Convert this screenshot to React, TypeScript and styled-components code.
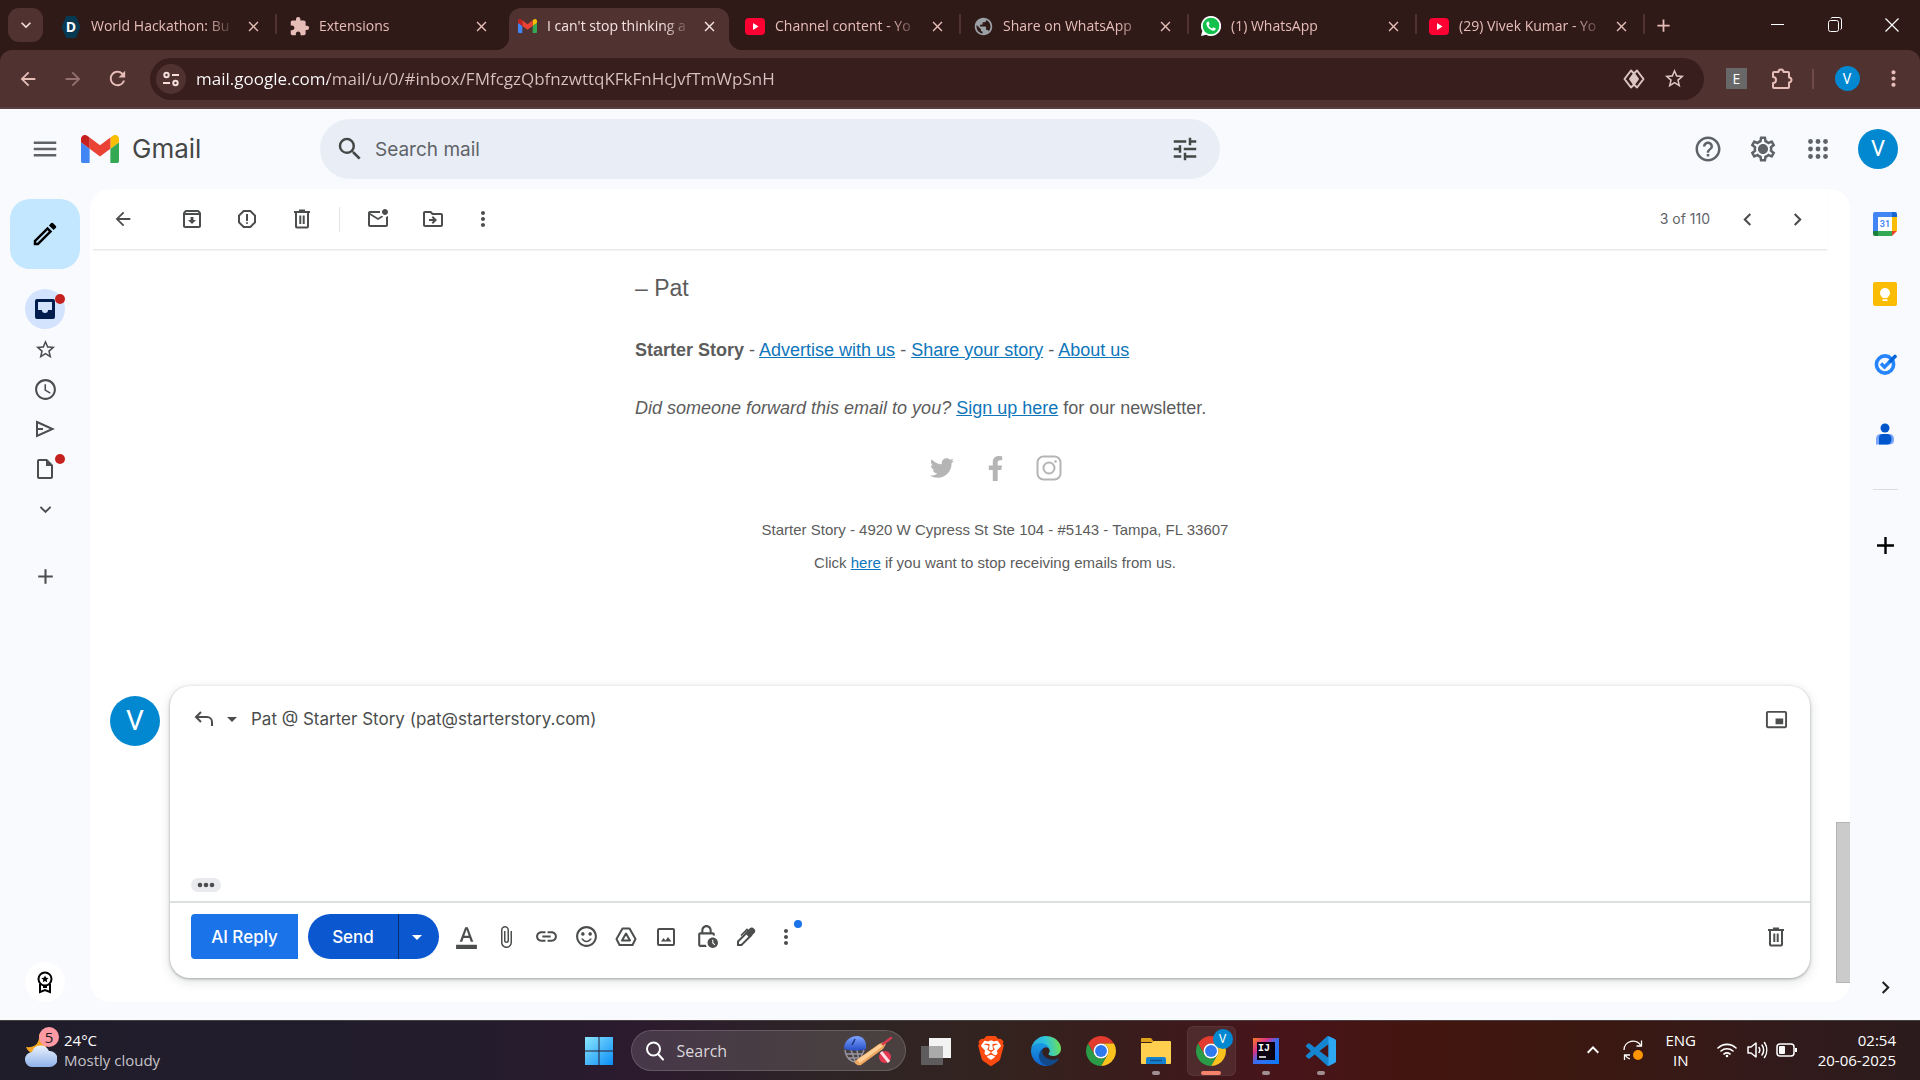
import React from "react";
import styled, { createGlobalStyle, css } from "styled-components";
import {
  MdAccessTime,
  MdAdd,
  MdArrowBack,
  MdArrowDropDown,
  MdArrowForward,
  MdAttachFile,
  MdChevronLeft,
  MdChevronRight,
  MdClose,
  MdExpandLess,
  MdExpandMore,
  MdExtension,
  MdFormatColorText,
  MdHelpOutline,
  MdLink,
  MdMenu,
  MdMoreVert,
  MdOutlineArchive,
  MdOutlineDriveFileMove,
  MdOutlineInsertDriveFile,
  MdOutlineLockClock,
  MdOutlineMarkEmailUnread,
  MdOutlineModeEdit,
  MdOutlineReport,
  MdOutlineSettings,
  MdPictureInPictureAlt,
  MdPublic,
  MdRefresh,
  MdSearch,
  MdSentimentSatisfiedAlt,
  MdStarBorder,
  MdTune,
} from "react-icons/md";
import { FaFacebookF, FaTwitter } from "react-icons/fa";
import { SiBrave } from "react-icons/si";

const ui = `"Open Sans", "Noto Sans", sans-serif`;
const product = `Inter, Roboto, sans-serif`;

const GlobalStyle = createGlobalStyle`
  *, *::before, *::after { box-sizing: border-box; }
  body { margin: 0; background: #f8fafe; }
  button { border: 0; padding: 0; background: none; font: inherit; color: inherit; cursor: pointer; }
  input, textarea { border: 0; padding: 0; background: none; font: inherit; color: inherit; outline: none; }
  p { margin: 0; }
  svg { display: block; flex: none; }
`;

const Screen = styled.div`
  display: flex;
  flex-direction: column;
  height: 100vh;
  min-width: 1200px;
  overflow: hidden;
  font-family: ${ui};
`;

/* ---------- browser chrome ---------- */

const TabStrip = styled.div`
  display: flex;
  align-items: flex-end;
  height: 50px;
  flex: none;
  background: #301a18;
  color: #e7bdb8;
`;

const TabSearch = styled.button`
  display: grid;
  place-items: center;
  width: 35px;
  height: 34px;
  margin: 0 6px 8px 8px;
  border-radius: 11px;
  background: #503331;
  color: #f3dedc;
`;

const Tabs = styled.div`
  display: flex;
  min-width: 0;
`;

const Tab = styled.div<{ $active?: boolean; $divided?: boolean }>`
  position: relative;
  display: flex;
  align-items: center;
  gap: 10px;
  width: 220px;
  height: 42px;
  margin: 0 4px;
  padding: 0 12px 6px 8px;
  font-size: 14px;
  line-height: 20px;

  ${(p) =>
    p.$divided &&
    css`
      &::after {
        content: "";
        position: absolute;
        right: -4px;
        top: 6px;
        width: 2px;
        height: 20px;
        background: #503331;
      }
    `}

  ${(p) =>
    p.$active &&
    css`
      color: #f5e4e2;
      z-index: 1;
      background: #503331;
      border-radius: 12px 12px 0 0;
      &::before,
      &::after {
        content: "";
        position: absolute;
        bottom: 0;
        width: 14px;
        height: 14px;
      }
      &::before {
        right: 100%;
        background: radial-gradient(circle at 0 0, transparent 14px, #503331 15px);
      }
      &::after {
        left: 100%;
        background: radial-gradient(circle at 100% 0, transparent 14px, #503331 15px);
      }
    `}
`;

const TabTitle = styled.span`
  flex: 1;
  min-width: 0;
  overflow: hidden;
  white-space: nowrap;
  mask-image: linear-gradient(90deg, #000 calc(100% - 28px), transparent);
`;

const TabIcon = styled.span`
  display: grid;
  place-items: center;
  width: 20px;
  height: 20px;
  flex: none;
`;

const TabClose = styled.button`
  display: grid;
  place-items: center;
  width: 16px;
  height: 20px;
  flex: none;
`;

const NewTab = styled.button`
  display: grid;
  place-items: center;
  width: 36px;
  height: 34px;
  margin-bottom: 8px;
`;

const WindowControls = styled.div`
  display: flex;
  margin-left: auto;
  align-self: stretch;
  color: #fff;
`;

const WindowButton = styled.button`
  display: grid;
  place-items: center;
  width: 57px;
  height: 50px;
`;

const ToolbarBacking = styled.div`
  flex: none;
  background: #301a18;
`;

const BrowserToolbar = styled.div`
  display: flex;
  align-items: center;
  height: 59px;
  padding: 0 6px 0 5px;
  background: #503331;
  border-bottom: 2px solid #5a3f40;
  border-radius: 12px 12px 0 0;
  color: #e7bdb8;
`;

const NavButton = styled.button<{ $width?: number; $dim?: boolean }>`
  display: grid;
  place-items: center;
  width: ${(p) => p.$width ?? 45}px;
  height: 40px;
  flex: none;
  opacity: ${(p) => (p.$dim ? 0.45 : 1)};
`;

const AddressBar = styled.div`
  display: flex;
  align-items: center;
  flex: 1;
  height: 42px;
  margin: 0 10px;
  padding: 0 10px 0 6px;
  border-radius: 21px;
  background: #391e1e;
  color: #dcc6c4;
`;

const SiteInfo = styled.button`
  display: grid;
  place-items: center;
  width: 30px;
  height: 30px;
  margin-right: 10px;
  border-radius: 50%;
  background: #503331;
  color: #f3dedc;
`;

const Url = styled.input`
  flex: 1;
  min-width: 0;
  height: 30px;
  font-size: 17px;
  color: #d8c3c1;
  background: linear-gradient(90deg, #fff 132px, #d8c3c1 132px);
  background-clip: text;
  -webkit-text-fill-color: transparent;
`;

const ExtensionBadge = styled.span`
  display: grid;
  place-items: center;
  width: 21px;
  height: 21px;
  background: #686868;
  color: #fff;
  font-size: 14px;
`;

const ToolbarDivider = styled.span`
  width: 2px;
  height: 20px;
  margin: 0 8px;
  background: #704a47;
`;

const Avatar = styled.span<{ $size: number; $font: number }>`
  display: grid;
  place-items: center;
  flex: none;
  width: ${(p) => p.$size}px;
  height: ${(p) => p.$size}px;
  border-radius: 50%;
  background: #0288d1;
  color: #fff;
  font-family: Roboto, sans-serif;
  font-size: ${(p) => p.$font}px;
  line-height: 1;
`;

/* ---------- mail app ---------- */

const Mail = styled.div`
  display: flex;
  flex-direction: column;
  flex: 1;
  min-height: 0;
  background: #f8fafe;
  color: #4b4e4d;
  font-family: ${product};
`;

const MailHeader = styled.header`
  display: flex;
  align-items: center;
  height: 80px;
  flex: none;
  padding-right: 22px;
  color: #5f6368;
`;

const Brand = styled.div`
  display: flex;
  align-items: center;
  width: 320px;
  flex: none;
  padding-left: 20px;
  color: #444746;
`;

const BrandName = styled.span`
  margin-left: 13px;
  font-size: 26px;
  line-height: 32px;
`;

const MenuButton = styled.button`
  display: grid;
  place-items: center;
  width: 50px;
  height: 50px;
  margin-right: 11px;
  color: #5f6368;
`;

const SearchBox = styled.form`
  display: flex;
  align-items: center;
  flex: 0 1 900px;
  height: 60px;
  padding: 0 20px 0 15px;
  border-radius: 30px;
  background: #e9eef6;
  color: #444746;
`;

const SearchInput = styled.input`
  flex: 1;
  min-width: 0;
  margin: 0 10px;
  font-size: 19px;
  &::placeholder {
    color: #5f6368;
    opacity: 1;
  }
`;

const HeaderActions = styled.div`
  display: flex;
  align-items: center;
  margin-left: auto;
`;

const IconButton = styled.button<{ $width?: number; $height?: number }>`
  position: relative;
  display: grid;
  place-items: center;
  flex: none;
  width: ${(p) => p.$width ?? 55}px;
  height: ${(p) => p.$height ?? 40}px;
`;

const AccountButton = styled.button`
  margin-left: 13px;
`;

const MailBody = styled.div`
  display: flex;
  flex: 1;
  min-height: 0;
  padding-bottom: 18px;
`;

const Rail = styled.nav`
  display: flex;
  flex-direction: column;
  align-items: center;
  width: 90px;
  flex: none;
  padding-top: 10px;
`;

const Compose = styled.button`
  display: grid;
  place-items: center;
  width: 70px;
  height: 70px;
  flex: none;
  margin-bottom: 20px;
  border-radius: 20px;
  background: #c2e7ff;
  color: #000;
`;

const RailItem = styled.button<{ $active?: boolean; $spaced?: boolean }>`
  position: relative;
  display: grid;
  place-items: center;
  width: 40px;
  height: 40px;
  flex: none;
  margin-top: ${(p) => (p.$spaced ? 27 : 0)}px;
  border-radius: 50%;
  background: ${(p) => (p.$active ? "#d3e3fd" : "transparent")};
  color: ${(p) => (p.$active ? "#001d4d" : "#4b4e4d")};
`;

const Dot = styled.span<{ $blue?: boolean }>`
  position: absolute;
  right: ${(p) => (p.$blue ? 4 : 0)}px;
  top: ${(p) => (p.$blue ? 3 : 5)}px;
  width: ${(p) => (p.$blue ? 8 : 10)}px;
  height: ${(p) => (p.$blue ? 8 : 10)}px;
  border-radius: 50%;
  background: ${(p) => (p.$blue ? "#1a73e8" : "#c5221f")};
`;

const Reward = styled.button`
  display: grid;
  place-items: center;
  width: 40px;
  height: 40px;
  margin-top: auto;
  border-radius: 50%;
  background: #fff;
  color: #000;
`;

const Panel = styled.main`
  display: flex;
  flex-direction: column;
  flex: 1;
  min-width: 0;
  border-radius: 20px;
  background: #fff;
  overflow: hidden;
`;

const Actions = styled.div`
  display: flex;
  align-items: center;
  height: 61px;
  flex: none;
  margin: 0 23px 0 3px;
  padding: 0 5px 0 2px;
  border-bottom: 1px solid #e6e8ea;
  box-shadow: 0 1px 1px #f3f4f5;
`;

const BackSlot = styled.div`
  margin-right: 14px;
`;

const ActionDivider = styled.span`
  width: 1px;
  height: 25px;
  margin: 0 10px;
  background: #e3e5e8;
`;

const Count = styled.span`
  margin: 0 12px 0 auto;
  font-size: 14px;
  line-height: 20px;
  color: #5f6368;
`;

const ScrollRow = styled.div`
  display: flex;
  flex: 1;
  min-height: 0;
`;

const Thread = styled.div`
  display: flex;
  flex-direction: column;
  flex: 1;
  min-width: 0;
  padding-bottom: 24px;
`;

const ScrollTrack = styled.div`
  display: flex;
  align-items: flex-end;
  width: 14px;
  flex: none;
  padding-bottom: 19px;
`;

const ScrollThumb = styled.div`
  width: 14px;
  height: 161px;
  border: 1px solid #b5b5b5;
  border-right: 0;
  background: #cbcbcb;
`;

const EmailArea = styled.div`
  padding: 19px 16px 0 80px;
`;

const Email = styled.article`
  max-width: 720px;
  margin: 0 auto;
  font-family: "Liberation Sans", Arial, sans-serif;
  font-size: 18px;
  line-height: 30px;
  color: #5c5c5c;
  a {
    color: #0f76bb;
  }
`;

const SignOff = styled.p`
  font-size: 23px;
  line-height: 38px;
`;

const EmailLine = styled.p`
  margin-top: 28px;
`;

const Socials = styled.div`
  display: flex;
  justify-content: center;
  align-items: center;
  gap: 28px;
  margin: 32px 0;
  a {
    display: grid;
    place-items: center;
    width: 25px;
    height: 26px;
    color: #b5b5b5;
  }
`;

const FinePrint = styled.p`
  font-size: 15px;
  line-height: 33px;
  text-align: center;
`;

const ReplyRow = styled.section`
  display: flex;
  align-items: flex-start;
  gap: 10px;
  margin-top: auto;
  padding: 0 26px 0 20px;
`;

const ReplyAvatar = styled.div`
  padding-top: 10px;
`;

const ReplyCard = styled.form`
  flex: 1;
  min-width: 0;
  border-radius: 20px;
  background: #fff;
  box-shadow: 0 1px 3px rgba(60, 64, 67, 0.42), 0 3px 10px 2px rgba(60, 64, 67, 0.12);
`;

const ReplyTop = styled.div`
  display: flex;
  align-items: center;
  height: 66px;
  padding: 0 14px 0 18px;
`;

const Recipient = styled.span`
  margin: 0 auto 0 15px;
  font-size: 17px;
  line-height: 24px;
`;

const ReplyText = styled.textarea`
  display: block;
  width: 100%;
  height: 126px;
  padding: 0 21px;
  resize: none;
  font-size: 17px;
`;

const Trimmed = styled.button`
  display: grid;
  place-items: center;
  width: 30px;
  height: 14px;
  margin: 0 0 9px 21px;
  border-radius: 7px;
  background: #e8eaed;
`;

const ReplyBar = styled.div`
  display: flex;
  align-items: center;
  height: 77px;
  padding: 0 14px 8px 21px;
  border-top: 2px solid #dcdfdf;
`;

const AiReply = styled.button`
  width: 107px;
  height: 45px;
  margin-right: 10px;
  border-radius: 4px 0 0 4px;
  background: #1a73e8;
  color: #fff;
  font-size: 17px;
  font-weight: 500;
`;

const SendGroup = styled.div`
  display: flex;
  width: 131px;
  height: 45px;
  flex: none;
  margin-right: 7px;
  border-radius: 23px;
  overflow: hidden;
  background: #0b57d0;
  color: #fff;
`;

const Send = styled.button`
  width: 91px;
  border-right: 1px solid #062e6f;
  font-size: 17px;
  font-weight: 500;
`;

const SendMore = styled.button`
  display: grid;
  place-items: center;
  flex: 1;
  padding-right: 4px;
`;

const BarEnd = styled.div`
  margin-left: auto;
`;

const SidePanel = styled.aside`
  display: flex;
  flex-direction: column;
  align-items: center;
  width: 70px;
  flex: none;
  color: #1f1f1f;
`;

const SideDivider = styled.span`
  width: 25px;
  height: 1px;
  margin: 20px 0;
  background: #dadce0;
`;

const SideBottom = styled.div`
  margin-top: auto;
`;

/* ---------- taskbar ---------- */

const Taskbar = styled.footer`
  display: grid;
  grid-template-columns: 1fr auto 1fr;
  align-items: center;
  height: 60px;
  flex: none;
  border-top: 1px solid #46403f;
  background: linear-gradient(
    90deg,
    #201d2b 0%,
    #221c2c 24%,
    #2c1a2e 33%,
    #2e2426 43%,
    #33231f 52%,
    #3b1b1c 60%,
    #48141a 67%,
    #42160f 75%,
    #3a1812 84%,
    #331a1a 92%,
    #2b1b1d 100%
  );
  color: #fff;
  font-size: 15px;
  line-height: 20px;
`;

const Weather = styled.button`
  position: relative;
  display: flex;
  align-items: center;
  gap: 7px;
  justify-self: start;
  padding: 0 0 2px 25px;
  text-align: left;
`;

const WeatherText = styled.span`
  display: flex;
  flex-direction: column;
  color: #fff;
`;

const Muted = styled.span`
  color: #c6c3c8;
`;

const WeatherBadge = styled.span`
  position: absolute;
  left: 39px;
  top: -3px;
  width: 20px;
  height: 20px;
  border-radius: 50%;
  background: #ff99a4;
  color: #1b1b1b;
  text-align: center;
`;

const Apps = styled.div`
  display: flex;
  align-items: center;
`;

const TaskSearch = styled.label`
  display: flex;
  align-items: center;
  width: 275px;
  height: 41px;
  margin: 0 3px 0 4px;
  padding: 0 12px 0 13px;
  border: 1px solid rgba(255, 255, 255, 0.16);
  border-radius: 21px;
  background: rgba(255, 255, 255, 0.13);
  font-size: 16px;
`;

const TaskSearchInput = styled.input`
  flex: 1;
  min-width: 0;
  margin-left: 12px;
  &::placeholder {
    color: #dcd7dc;
    opacity: 1;
  }
`;

const AppButton = styled.button<{ $active?: boolean; $running?: boolean }>`
  position: relative;
  display: grid;
  place-items: center;
  width: 49px;
  height: 50px;
  margin: 0 3px;
  border-radius: 6px;
  background: ${(p) => (p.$active ? "rgba(255,255,255,0.08)" : "transparent")};
  box-shadow: ${(p) => (p.$active ? "inset 0 0 0 1px rgba(255,255,255,0.05)" : "none")};
  &::after {
    content: "";
    position: absolute;
    bottom: 1px;
    width: ${(p) => (p.$active ? 20 : 8)}px;
    height: 4px;
    border-radius: 2px;
    background: ${(p) => (p.$active ? "#f5836b" : p.$running ? "#a08f92" : "transparent")};
  }
`;

const ProfileBadge = styled.span`
  position: absolute;
  right: 3px;
  top: 3px;
`;

const Tray = styled.div`
  display: flex;
  align-items: center;
  justify-self: end;
  padding: 0 24px 2px 0;
`;

const TrayButton = styled.button<{ $width: number }>`
  display: grid;
  place-items: center;
  width: ${(p) => p.$width}px;
  height: 40px;
  text-align: center;
`;

const Clock = styled.button`
  margin-left: 15px;
  text-align: right;
`;

/* ---------- drawings ---------- */

const GmailLogo = ({ width }: { width: number }) => (
  <svg width={width} height={width * 0.75} viewBox="52 42 88 66">
    <path fill="#4285f4" d="M58 108h14V74L52 59v43c0 3.32 2.69 6 6 6" />
    <path fill="#34a853" d="M120 108h14c3.32 0 6-2.69 6-6V59l-20 15" />
    <path fill="#fbbc04" d="M120 48v26l20-15v-8c0-7.42-8.47-11.65-14.4-7.2" />
    <path fill="#ea4335" d="M72 74V48l24 18 24-18v26L96 92" />
    <path fill="#c5221f" d="M52 51v8l20 15V48l-5.6-4.2c-5.94-4.45-14.4-.22-14.4 7.2" />
  </svg>
);

const YouTubeLogo = () => (
  <svg width="20" height="17" viewBox="0 0 20 17">
    <rect width="20" height="17" rx="4" fill="#ff0033" />
    <path d="M8 5l5.500 3.500L8 12z" fill="#fff" />
  </svg>
);

const HexBadge = styled.span`
  display: grid;
  place-items: center;
  width: 19px;
  height: 22px;
  background: #053a52;
  clip-path: polygon(25% 0, 75% 0, 100% 50%, 75% 100%, 25% 100%, 0 50%);
  color: #fff;
  font-size: 14px;
  font-weight: 700;
  line-height: 20px;
`;

const WhatsAppLogo = () => (
  <svg width="20" height="20" viewBox="0 0 24 24">
    <path d="M12 0a12 12 0 0 0-10.400 18L0 24l6.200-1.600A12 12 0 1 0 12 0z" fill="#fff" />
    <circle cx="12" cy="12" r="10" fill="#12c14b" />
    <path
      d="M8.300 6.500c-.4 0-1.800.9-1.800 2.900 0 4 5.200 8.300 8.400 8.300 1.700 0 2.800-1.300 2.800-2.700l-2.800-1.500-1.500 1.500c-1.700-.5-3.600-2.400-4.200-4l1.200-1.500-1.200-2.800z"
      fill="#fff"
    />
  </svg>
);

const PuzzleIcon = () => (
  <svg width="24" height="24" viewBox="0 0 24 24" fill="none" stroke="currentColor" strokeWidth="2" strokeLinejoin="round">
    <path d="M4 5h4.500a2.500 2.500 0 0 1 5 0H18a1 1 0 0 1 1 1v4.500a2.500 2.500 0 0 1 0 5V20a1 1 0 0 1-1 1H4a1 1 0 0 1-1-1v-4a3 3 0 0 0 0-6V6a1 1 0 0 1 1-1z" />
  </svg>
);

const SiteInfoIcon = () => (
  <svg width="18" height="18" viewBox="0 0 18 18" fill="none" stroke="currentColor" strokeWidth="2">
    <circle cx="4.500" cy="5" r="2.200" />
    <path d="M10 5h7M1 13h7" />
    <circle cx="13.500" cy="13" r="2.200" />
  </svg>
);

const LensIcon = () => (
  <svg width="22" height="20" viewBox="0 0 22 20" fill="none" stroke="currentColor" strokeWidth="2" strokeLinejoin="round">
    <path d="M11 4.500L8 1.500 1.500 10 8 18.500l3-3M11 4.500l3-3L20.500 10 14 18.500l-3-3" />
    <path d="M11 4.500l4 5.500-4 5.500L7 10z" fill="currentColor" />
  </svg>
);

const RestoreIcon = () => (
  <svg width="14" height="16" viewBox="0 0 14 16" fill="none" stroke="currentColor">
    <rect x="0.500" y="3.500" width="10" height="11" rx="2" />
    <path d="M3 1.500A1.500 1.500 0 0 1 4 .5h7A2.500 2.500 0 0 1 13.500 3v8a1.500 1.500 0 0 1-1 1.500" />
  </svg>
);

const GearIcon = () => (
  <svg width="30" height="30" viewBox="0 0 30 30">
    <MdOutlineSettings size={30} />
    <circle cx="15" cy="15" r="4.500" fill="currentColor" />
  </svg>
);

const AppsIcon = () => (
  <svg width="20" height="20" viewBox="0 0 20 20" fill="currentColor">
    {[2.5, 10, 17.5].map((y) => [2.5, 10, 17.5].map((x) => <circle key={`${x}-${y}`} cx={x} cy={y} r="2.400" />))}
  </svg>
);

const TrashIcon = () => (
  <svg width="20" height="22" viewBox="0 0 20 22" fill="none" stroke="currentColor" strokeWidth="2">
    <path d="M2 4h16M7 2.500h6" />
    <path d="M4 4v14.500a1 1 0 0 0 1 1h10a1 1 0 0 0 1-1V4" />
    <path d="M8.300 7.500v8.500M11.700 7.500v8.500" />
  </svg>
);

const InboxIcon = () => (
  <svg width="20" height="20" viewBox="0 0 20 20">
    <path
      fill="currentColor"
      fillRule="evenodd"
      d="M2 0h16a2 2 0 0 1 2 2v16a2 2 0 0 1-2 2H2a2 2 0 0 1-2-2V2a2 2 0 0 1 2-2zM3 3v8h4a3 3 0 0 0 6 0h4V3z"
    />
  </svg>
);

const SentIcon = () => (
  <svg width="20" height="18" viewBox="0 0 20 18" fill="none" stroke="currentColor" strokeWidth="2">
    <path d="M2 2l15.500 7L2 16zM2 9h6" />
  </svg>
);

const EllipsisIcon = () => (
  <svg width="18" height="6" viewBox="0 0 18 6" fill="currentColor">
    <circle cx="3" cy="3" r="2.300" />
    <circle cx="9" cy="3" r="2.300" />
    <circle cx="15" cy="3" r="2.300" />
  </svg>
);

const AwardIcon = () => (
  <svg width="20" height="24" viewBox="0 0 20 24" fill="none" stroke="currentColor" strokeWidth="2">
    <circle cx="10" cy="9" r="6.500" />
    <path d="M5 14v8l5-2 5 2v-8" />
    <path d="M10 5.500l1.100 2.300 2.500.3-1.900 1.700.5 2.500-2.200-1.200-2.200 1.200.5-2.500-1.900-1.700 2.500-.3z" fill="currentColor" stroke="none" />
    <path d="M8 17h4" />
  </svg>
);

const InstagramIcon = () => (
  <svg width="26" height="26" viewBox="0 0 26 26" fill="none" stroke="currentColor" strokeWidth="2">
    <rect x="1.500" y="1.500" width="23" height="23" rx="6" />
    <circle cx="13" cy="13" r="5.500" />
    <circle cx="19.500" cy="6.500" r="1.300" fill="currentColor" stroke="none" />
  </svg>
);

const ReplyIcon = () => (
  <svg width="20" height="18" viewBox="0 0 20 18" fill="none" stroke="currentColor" strokeWidth="2">
    <path d="M7 2L2 7l5 5M2 7h11a5 5 0 0 1 5 5v4" />
  </svg>
);

const DriveIcon = () => (
  <svg width="22" height="20" viewBox="0 0 22 20" fill="none" stroke="currentColor" strokeWidth="2" strokeLinejoin="round">
    <path d="M7.500 1.500h7l6 10.500-3 6h-13l-3-6z" />
    <path d="M11 6.500l4 7H7z" />
  </svg>
);

const PhotoIcon = () => (
  <svg width="20" height="20" viewBox="0 0 20 20" fill="none" stroke="currentColor" strokeWidth="2">
    <rect x="2" y="2" width="16" height="16" rx="1" />
    <path d="M5 14.500l2.500-3.500 2 2.500 2.500-3.500 3.500 4.500z" fill="currentColor" stroke="none" />
  </svg>
);

const PenIcon = () => (
  <svg width="20" height="20" viewBox="0 0 20 20" fill="none" stroke="currentColor" strokeWidth="2">
    <path d="M2 18v-3.500L11.500 5l3.500 3.500L5.500 18z" />
    <path d="M10.500 6l4-4c1-1 2-.5 3 .5s1 2 0 3l-4 4z" fill="currentColor" />
    <path d="M5 8.500L11 2.500l2 2" strokeWidth="1.600" />
  </svg>
);

const CalendarText = styled.text`
  font: 600 9px Roboto, sans-serif;
`;

const CalendarLogo = () => (
  <svg width="24" height="24" viewBox="0 0 24 24">
    <path d="M2 0h17v5H5v14H0V2a2 2 0 0 1 2-2z" fill="#4285f4" />
    <path d="M19 0h3a2 2 0 0 1 2 2v3h-5z" fill="#1967d2" />
    <path d="M19 5h5v14h-5z" fill="#fbbc04" />
    <path d="M5 19h14v5H5z" fill="#34a853" />
    <path d="M0 19h5v5H2a2 2 0 0 1-2-2z" fill="#188038" />
    <path d="M19 19h5l-5 5z" fill="#ea4335" />
    <path d="M5 5h14v14H5z" fill="#fff" />
    <CalendarText x="12" y="15" textAnchor="middle" fill="#4285f4">31</CalendarText>
  </svg>
);

const KeepLogo = () => (
  <svg width="24" height="24" viewBox="0 0 24 24">
    <rect width="24" height="24" rx="2" fill="#fbbc04" />
    <circle cx="12" cy="11" r="5" fill="#fff" />
    <path d="M9.500 13h5v3h-5zM9.500 17.200h5V19h-5z" fill="#fff" />
  </svg>
);

const TasksLogo = () => (
  <svg width="24" height="24" viewBox="0 0 24 24" fill="none">
    <circle cx="12" cy="12.500" r="8.600" stroke="#2684fc" strokeWidth="3.600" />
    <path d="M8 11.500l3.500 3.500L20 6.500" stroke="#2684fc" strokeWidth="3.600" />
    <path d="M17.500 9L22 4.500" stroke="#0066da" strokeWidth="3.600" strokeLinecap="round" />
  </svg>
);

const ContactsLogo = () => (
  <svg width="20" height="24" viewBox="0 0 20 24">
    <path d="M5 12h10a5 5 0 0 1 4 5v1a4.500 4.500 0 0 1-4 4.500H1V17a5 5 0 0 1 4-5z" fill="#7ba5f8" />
    <circle cx="10" cy="6" r="4.500" fill="#0057cc" />
    <path d="M8 12h4a4.500 4.500 0 0 1 4.500 4.500V18a4.500 4.500 0 0 1-4.500 4.500H4V16a4 4 0 0 1 4-4z" fill="#0057cc" />
  </svg>
);

const WeatherLogo = () => (
  <svg width="32" height="36" viewBox="0 0 32 36">
    <defs>
      <linearGradient id="cloud" x1="0" y1="0" x2="0" y2="1">
        <stop offset="0" stopColor="#eaf2fd" />
        <stop offset="1" stopColor="#8fb2ea" />
      </linearGradient>
    </defs>
    <path d="M14 2c1 9-4 14-13 13 3 8 14 9 19 2s2-14-6-15z" fill="#f5a623" />
    <path d="M8 35a7.500 7.500 0 0 1-1-15 9 9 0 0 1 17-1 8 8 0 0 1 1 16z" fill="url(#cloud)" />
  </svg>
);

const WindowsLogo = () => (
  <svg width="30" height="30" viewBox="0 0 30 30">
    <defs>
      <linearGradient id="win" x1="0" y1="0" x2="1" y2="1">
        <stop offset="0" stopColor="#8ae6fe" />
        <stop offset="1" stopColor="#0a8cf6" />
      </linearGradient>
    </defs>
    <path d="M1 1h13.500v13.500H1zM15.500 1H29v13.500H15.500zM1 15.500h13.500V29H1zM15.500 15.500H29V29H15.500z" fill="url(#win)" />
  </svg>
);

const CricketArt = () => (
  <svg width="50" height="32" viewBox="0 0 50 32">
    <defs>
      <linearGradient id="helmet" x1="0" y1="0" x2="0" y2="1">
        <stop offset="0" stopColor="#7ea3ff" />
        <stop offset="1" stopColor="#2750c8" />
      </linearGradient>
    </defs>
    <path d="M2 15c1 8 6 13 14 12l5-12M3 19h16M5 23h12M8 15l4 11M14 15l2 11" fill="none" stroke="#9a96a0" strokeWidth="1.500" />
    <path d="M1 14C1 5 8 1 14 1s10 5 9 13c-5 2-14 2-22 0z" fill="url(#helmet)" />
    <path d="M12 4l-3 6" stroke="#1a3580" strokeWidth="1.500" />
    <path d="M12 26L36 9l5-2 2 2-3 5-22 16c-3 1-7-1-6-4z" fill="#eda763" />
    <path d="M14 25L37 9l3 2-23 17z" fill="#ffcf95" />
    <path d="M40 9l8-6" stroke="#d93a50" strokeWidth="2.500" strokeLinecap="round" />
    <circle cx="42" cy="22" r="6" fill="#e23850" />
    <path d="M38 17l8 10" stroke="#ffdfe2" strokeWidth="3" />
  </svg>
);

const TaskViewLogo = () => (
  <svg width="30" height="30" viewBox="0 0 30 30">
    <rect x="8" y="2" width="22" height="20" fill="#f3f3f3" />
    <rect x="0" y="10" width="22" height="19" fill="#666" fillOpacity="0.85" />
    <rect x="8" y="10" width="14" height="12" fill="#aaa" />
  </svg>
);

const BraveLogo = () => (
  <svg width="28" height="30" viewBox="0 0 28 30">
    <path d="M7 4h14l4 6-3 12-8 6-8-6-3-12z" fill="#fff" />
    <g transform="translate(-1 0)" color="#fb4a10">
      <SiBrave size={30} />
    </g>
  </svg>
);

const EdgeLogo = () => (
  <svg width="30" height="30" viewBox="0 0 256 256">
    <defs>
      <linearGradient id="edgeTop" x1="0" y1="0.500" x2="1" y2="0.400">
        <stop offset="0" stopColor="#2aa8dc" />
        <stop offset="0.500" stopColor="#2fc4dc" />
        <stop offset="1" stopColor="#6ee052" />
      </linearGradient>
      <linearGradient id="edgeMid" x1="0.300" y1="0" x2="0.300" y2="1">
        <stop offset="0" stopColor="#1ba0e6" />
        <stop offset="1" stopColor="#0e62cc" />
      </linearGradient>
    </defs>
    <g transform="translate(-4.630 -4.920)">
      <path fill="#114a8b" d="M235.68 195.490a93.730 93.730 0 01-10.540 4.710 101.870 101.870 0 01-35.900 6.460c-47.320 0-88.540-32.550-88.540-74.320A31.480 31.480 0 01117.130 105c-42.800 1.800-53.800 46.400-53.800 72.530 0 73.880 68.090 81.370 82.760 81.370 7.910 0 19.840-2.300 27-4.560l1.310-.44a128.340 128.340 0 0066.600-52.800 4 4 0 00-5.320-5.610z" />
      <path fill="url(#edgeMid)" d="M110.340 246.340A79.200 79.200 0 0187.600 225a80.720 80.720 0 0129.530-120c3.120-1.470 8.450-4.130 15.540-4a32.350 32.350 0 0125.690 13 31.880 31.880 0 016.360 18.660c0-.21 24.460-79.600-80-79.600-43.900 0-80 41.660-80 78.210a130.150 130.150 0 0012.110 56 128 128 0 00156.380 67.110 75.550 75.550 0 01-62.780-8z" />
      <path fill="url(#edgeTop)" d="M156.940 153.780c-.81 1.050-3.300 2.500-3.300 5.660 0 2.610 1.700 5.120 4.720 7.230 14.380 10 41.490 8.680 41.560 8.680a59.560 59.560 0 0030.270-8.350 61.380 61.380 0 0030.430-52.880c.26-22.410-8-37.310-11.340-43.910C228.090 28.760 182.350 5 132.610 5a128 128 0 00-128 126.200c.48-36.540 36.800-66.050 80-66.050 3.500 0 23.460.34 42 10.070 16.340 8.580 24.900 18.940 30.850 29.210 6.180 10.670 7.280 24.150 7.280 29.520s-2.740 13.330-7.800 19.830z" />
    </g>
  </svg>
);

const ChromeLogo = () => (
  <svg width="30" height="30" viewBox="0 0 48 48">
    <path fill="#e33b2e" d="M3.220 12A24 24 0 0 1 44.780 12H24A12 12 0 0 0 13.610 30z" />
    <path fill="#fcc31e" d="M44.780 12A24 24 0 0 1 24 48L34.390 30A12 12 0 0 0 24 12z" />
    <path fill="#2a9c48" d="M24 48A24 24 0 0 1 3.220 12L13.610 30A12 12 0 0 0 34.390 30z" />
    <circle cx="24" cy="24" r="12" fill="#fff" />
    <circle cx="24" cy="24" r="9.500" fill="#2f78ee" />
  </svg>
);

const ExplorerLogo = () => (
  <svg width="30" height="28" viewBox="0 0 30 28">
    <path d="M0 2a1 1 0 0 1 1-1h9l3 4h-13z" fill="#dfa31a" />
    <path d="M0 6h10l3-2h16a1 1 0 0 1 1 1v21a1 1 0 0 1-1 1H1a1 1 0 0 1-1-1z" fill="#ffd04f" />
    <path d="M5 27v-5a2 2 0 0 1 2-2h16a2 2 0 0 1 2 2v5z" fill="#1680d0" />
    <path d="M9 23.500h12" stroke="#0b548f" strokeWidth="1.500" />
  </svg>
);

const IjText = styled.text`
  font: 700 10px "Liberation Mono", monospace;
`;

const IntelliJLogo = () => (
  <svg width="26" height="26" viewBox="0 0 26 26">
    <defs>
      <linearGradient id="ij" x1="0" y1="0" x2="1" y2="1">
        <stop offset="0" stopColor="#fc801d" />
        <stop offset="0.300" stopColor="#d8318a" />
        <stop offset="0.500" stopColor="#3a6df0" />
        <stop offset="1" stopColor="#087cfa" />
      </linearGradient>
    </defs>
    <rect width="26" height="26" fill="url(#ij)" />
    <rect x="4" y="4" width="18" height="18" fill="#0a0010" />
    <IjText x="5" y="13" fill="#fff">IJ</IjText>
    <path d="M6 19h7" stroke="#fff" strokeWidth="1.500" />
  </svg>
);

const CodeLogo = () => (
  <svg width="30" height="30" viewBox="0 0 24 24">
    <path
      fill="#1685cf"
      d="M23.150 2.587L18.210.21a1.494 1.494 0 0 0-1.705.29l-9.460 8.630-4.120-3.128a.999.999 0 0 0-1.276.057L.327 7.261A1 1 0 0 0 .326 8.740L3.899 12 .326 15.260a1 1 0 0 0 .001 1.479L1.650 17.940a.999.999 0 0 0 1.276.057l4.120-3.128 9.460 8.630a1.492 1.492 0 0 0 1.704.290l4.942-2.377A1.500 1.500 0 0 0 24 20.060V3.939a1.500 1.500 0 0 0-.85-1.352zm-5.146 14.861L10.826 12l7.178-5.448v10.896z"
    />
    <path fill="#2fa8f4" d="M18 .1l5.150 2.487A1.500 1.500 0 0 1 24 3.939V20.060a1.500 1.500 0 0 1-.85 1.352L18 23.900z" />
  </svg>
);

const SyncIcon = () => (
  <svg width="22" height="22" viewBox="0 0 22 22" fill="none" stroke="#fff" strokeWidth="1.300">
    <path d="M2 11a9 9 0 0 1 17-4M19.500 1.500V7h-5M8 20a9 9 0 0 1-5-4M2.500 21v-5H8" />
    <circle cx="16" cy="16" r="5" fill="#ff9500" stroke="none" />
  </svg>
);

const WifiIcon = () => (
  <svg width="20" height="16" viewBox="0 0 20 16" fill="none" stroke="#fff" strokeWidth="1.600" strokeLinecap="round">
    <path d="M1 6a13 13 0 0 1 18 0M4 9a9 9 0 0 1 12 0M7 12a5 5 0 0 1 6 0" />
    <circle cx="10" cy="14" r="1.300" fill="#fff" stroke="none" />
  </svg>
);

const VolumeIcon = () => (
  <svg width="21" height="18" viewBox="0 0 21 18" fill="none" stroke="#fff" strokeWidth="1.500" strokeLinecap="round" strokeLinejoin="round">
    <path d="M1 6h3l5-4v14l-5-4H1zM12 6.500c1 1.500 1 3.500 0 5M15 4c2 3 2 7 0 10M17.500 1.500c3 4.500 3 10.500 0 15" />
  </svg>
);

const BatteryIcon = () => (
  <svg width="21" height="14" viewBox="0 0 21 14" fill="none" stroke="#fff" strokeWidth="1.500">
    <rect x="1" y="1" width="17" height="12" rx="3" />
    <rect x="3" y="3" width="6" height="8" rx="1" fill="#fff" stroke="none" />
    <path d="M20 5v4" strokeWidth="2" />
  </svg>
);

const tabs = [
  { title: "World Hackathon: Bu", icon: <HexBadge>D</HexBadge>, divided: true },
  { title: "Extensions", icon: <MdExtension size={21} /> },
  { title: "I can't stop thinking a", icon: <GmailLogo width={19} />, active: true },
  { title: "Channel content - Yo", icon: <YouTubeLogo />, divided: true },
  { title: "Share on WhatsApp", icon: <MdPublic size={21} color="#9aa0a6" />, divided: true },
  { title: "(1) WhatsApp", icon: <WhatsAppLogo />, divided: true },
  { title: "(29) Vivek Kumar - Yo", icon: <YouTubeLogo />, divided: true },
];

const railItems = [
  { name: "Inbox", icon: <InboxIcon />, active: true, dot: true },
  { name: "Starred", icon: <MdStarBorder size={23} /> },
  { name: "Snoozed", icon: <MdAccessTime size={25} /> },
  { name: "Sent", icon: <SentIcon /> },
  { name: "Drafts", icon: <MdOutlineInsertDriveFile size={24} />, dot: true },
  { name: "More labels", icon: <MdExpandMore size={23} /> },
];

const composeTools = [
  { name: "Formatting options", icon: <MdFormatColorText size={25} /> },
  { name: "Attach files", icon: <MdAttachFile size={24} /> },
  { name: "Insert link", icon: <MdLink size={25} /> },
  { name: "Insert emoji", icon: <MdSentimentSatisfiedAlt size={25} /> },
  { name: "Insert from Drive", icon: <DriveIcon /> },
  { name: "Insert photo", icon: <PhotoIcon /> },
  { name: "Confidential mode", icon: <MdOutlineLockClock size={25} /> },
  { name: "Insert signature", icon: <PenIcon /> },
];

const sideApps = [
  { name: "Calendar", icon: <CalendarLogo /> },
  { name: "Keep", icon: <KeepLogo /> },
  { name: "Tasks", icon: <TasksLogo /> },
  { name: "Contacts", icon: <ContactsLogo /> },
];

const Browser = () => (
  <>
    <TabStrip>
      <TabSearch aria-label="Search tabs"><MdExpandMore size={20} /></TabSearch>
      <Tabs>
        {tabs.map((t) => (
          <Tab key={t.title} $active={t.active} $divided={t.divided}>
            <TabIcon>{t.icon}</TabIcon>
            <TabTitle>{t.title}</TabTitle>
            <TabClose aria-label="Close tab"><MdClose size={17} /></TabClose>
          </Tab>
        ))}
      </Tabs>
      <NewTab aria-label="New tab"><MdAdd size={21} /></NewTab>
      <WindowControls>
        <WindowButton aria-label="Minimize">
          <svg width="13" height="2" viewBox="0 0 13 2"><path d="M0 .5h13" stroke="currentColor" /></svg>
        </WindowButton>
        <WindowButton aria-label="Restore"><RestoreIcon /></WindowButton>
        <WindowButton aria-label="Close window">
          <svg width="14" height="14" viewBox="0 0 14 14"><path d="M.5 .5l13 13M13.500 .5l-13 13" stroke="currentColor" strokeWidth="1.200" /></svg>
        </WindowButton>
      </WindowControls>
    </TabStrip>
    <ToolbarBacking>
      <BrowserToolbar>
        <NavButton aria-label="Back"><MdArrowBack size={22} /></NavButton>
        <NavButton aria-label="Forward" $dim><MdArrowForward size={22} /></NavButton>
        <NavButton aria-label="Reload"><MdRefresh size={23} /></NavButton>
        <AddressBar>
          <SiteInfo aria-label="Site information"><SiteInfoIcon /></SiteInfo>
          <Url aria-label="Address" defaultValue="mail.google.com/mail/u/0/#inbox/FMfcgzQbfnzwttqKFkFnHcJvfTmWpSnH" />
          <NavButton $width={40} aria-label="Search with Lens"><LensIcon /></NavButton>
          <NavButton $width={40} aria-label="Bookmark"><MdStarBorder size={23} /></NavButton>
        </AddressBar>
        <NavButton aria-label="Extension"><ExtensionBadge>E</ExtensionBadge></NavButton>
        <NavButton aria-label="Extensions"><PuzzleIcon /></NavButton>
        <ToolbarDivider />
        <NavButton $width={50} aria-label="Profile"><Avatar $size={25} $font={14}>V</Avatar></NavButton>
        <NavButton $width={42} aria-label="Browser menu"><MdMoreVert size={25} /></NavButton>
      </BrowserToolbar>
    </ToolbarBacking>
  </>
);

const MailToolbar = () => (
  <Actions>
    <BackSlot><IconButton aria-label="Back to inbox"><MdArrowBack size={22} /></IconButton></BackSlot>
    <IconButton aria-label="Archive"><MdOutlineArchive size={24} /></IconButton>
    <IconButton aria-label="Report spam"><MdOutlineReport size={24} /></IconButton>
    <IconButton aria-label="Delete"><TrashIcon /></IconButton>
    <ActionDivider />
    <IconButton aria-label="Mark as unread"><MdOutlineMarkEmailUnread size={24} /></IconButton>
    <IconButton aria-label="Move to"><MdOutlineDriveFileMove size={24} /></IconButton>
    <IconButton $width={45} aria-label="More"><MdMoreVert size={24} /></IconButton>
    <Count>3 of 110</Count>
    <IconButton $width={50} aria-label="Newer"><MdChevronLeft size={25} /></IconButton>
    <IconButton $width={50} aria-label="Older"><MdChevronRight size={25} /></IconButton>
  </Actions>
);

const Message = () => (
  <EmailArea>
    <Email>
      <SignOff>– Pat</SignOff>
      <EmailLine>
        <b>Starter Story</b> - <a href="#advertise">Advertise with us</a> - <a href="#share">Share your story</a> -{" "}
        <a href="#about">About us</a>
      </EmailLine>
      <EmailLine>
        <i>Did someone forward this email to you?</i> <a href="#signup">Sign up here</a> for our newsletter.
      </EmailLine>
      <Socials>
        <a href="#twitter" aria-label="Twitter"><FaTwitter size={24} /></a>
        <a href="#facebook" aria-label="Facebook"><FaFacebookF size={25} /></a>
        <a href="#instagram" aria-label="Instagram"><InstagramIcon /></a>
      </Socials>
      <FinePrint>Starter Story - 4920 W Cypress St Ste 104 - #5143 - Tampa, FL 33607</FinePrint>
      <FinePrint>
        Click <a href="#unsubscribe">here</a> if you want to stop receiving emails from us.
      </FinePrint>
    </Email>
  </EmailArea>
);

const Reply = () => (
  <ReplyRow>
    <ReplyAvatar><Avatar $size={50} $font={28}>V</Avatar></ReplyAvatar>
    <ReplyCard onSubmit={(e) => e.preventDefault()}>
      <ReplyTop>
        <IconButton type="button" $width={32} aria-label="Type of response"><ReplyIcon /></IconButton>
        <IconButton type="button" $width={16} aria-label="Response options"><MdArrowDropDown size={24} /></IconButton>
        <Recipient>Pat @ Starter Story (pat@starterstory.com)</Recipient>
        <IconButton type="button" $width={40} aria-label="Pop out reply"><MdPictureInPictureAlt size={23} /></IconButton>
      </ReplyTop>
      <ReplyText aria-label="Message body" />
      <Trimmed type="button" aria-label="Show trimmed content"><EllipsisIcon /></Trimmed>
      <ReplyBar>
        <AiReply type="button">AI Reply</AiReply>
        <SendGroup>
          <Send type="submit">Send</Send>
          <SendMore type="button" aria-label="More send options"><MdArrowDropDown size={24} /></SendMore>
        </SendGroup>
        {composeTools.map((t) => (
          <IconButton type="button" key={t.name} $width={40} aria-label={t.name}>{t.icon}</IconButton>
        ))}
        <IconButton type="button" $width={40} aria-label="More options">
          <MdMoreVert size={24} />
          <Dot $blue />
        </IconButton>
        <BarEnd>
          <IconButton type="button" $width={40} aria-label="Discard draft"><TrashIcon /></IconButton>
        </BarEnd>
      </ReplyBar>
    </ReplyCard>
  </ReplyRow>
);

const MailApp = () => (
  <Mail>
    <MailHeader>
      <Brand>
        <MenuButton aria-label="Main menu"><MdMenu size={30} /></MenuButton>
        <GmailLogo width={38} />
        <BrandName>Gmail</BrandName>
      </Brand>
      <SearchBox role="search" onSubmit={(e) => e.preventDefault()}>
        <IconButton $width={30} aria-label="Search"><MdSearch size={30} /></IconButton>
        <SearchInput aria-label="Search mail" placeholder="Search mail" />
        <IconButton type="button" $width={30} aria-label="Search options"><MdTune size={30} /></IconButton>
      </SearchBox>
      <HeaderActions>
        <IconButton aria-label="Support"><MdHelpOutline size={30} /></IconButton>
        <IconButton aria-label="Settings"><GearIcon /></IconButton>
        <IconButton aria-label="Google apps"><AppsIcon /></IconButton>
        <AccountButton aria-label="Account"><Avatar $size={40} $font={22}>V</Avatar></AccountButton>
      </HeaderActions>
    </MailHeader>
    <MailBody>
      <Rail>
        <Compose aria-label="Compose"><MdOutlineModeEdit size={30} /></Compose>
        {railItems.map((r) => (
          <RailItem key={r.name} $active={r.active} aria-label={r.name}>
            {r.icon}
            {r.dot && <Dot />}
          </RailItem>
        ))}
        <RailItem $spaced aria-label="Create label"><MdAdd size={25} /></RailItem>
        <Reward aria-label="Rewards"><AwardIcon /></Reward>
      </Rail>
      <Panel>
        <MailToolbar />
        <ScrollRow>
          <Thread>
            <Message />
            <Reply />
          </Thread>
          <ScrollTrack><ScrollThumb /></ScrollTrack>
        </ScrollRow>
      </Panel>
      <SidePanel>
        {sideApps.map((a) => (
          <IconButton key={a.name} $height={70} aria-label={a.name}>{a.icon}</IconButton>
        ))}
        <SideDivider />
        <IconButton $height={70} aria-label="Get add-ons"><MdAdd size={29} color="#000" /></IconButton>
        <SideBottom>
          <IconButton $height={30} aria-label="Hide side panel"><MdChevronRight size={25} /></IconButton>
        </SideBottom>
      </SidePanel>
    </MailBody>
  </Mail>
);

const DesktopBar = () => (
  <Taskbar>
    <Weather>
      <WeatherLogo />
      <WeatherBadge>5</WeatherBadge>
      <WeatherText>
        24°C
        <Muted>Mostly cloudy</Muted>
      </WeatherText>
    </Weather>
    <Apps>
      <AppButton aria-label="Start"><WindowsLogo /></AppButton>
      <TaskSearch>
        <svg width="20" height="20" viewBox="0 0 20 20" fill="none" stroke="#fff" strokeWidth="2" strokeLinecap="round">
          <circle cx="8.500" cy="8" r="6.500" />
          <path d="M13 13l5 5.500" />
        </svg>
        <TaskSearchInput aria-label="Search" placeholder="Search" />
        <CricketArt />
      </TaskSearch>
      <AppButton aria-label="Task view"><TaskViewLogo /></AppButton>
      <AppButton aria-label="Brave"><BraveLogo /></AppButton>
      <AppButton aria-label="Edge"><EdgeLogo /></AppButton>
      <AppButton aria-label="Chrome"><ChromeLogo /></AppButton>
      <AppButton aria-label="File Explorer" $running><ExplorerLogo /></AppButton>
      <AppButton aria-label="Chrome, profile V" $active>
        <ChromeLogo />
        <ProfileBadge><Avatar $size={20} $font={12}>V</Avatar></ProfileBadge>
      </AppButton>
      <AppButton aria-label="IntelliJ IDEA" $running><IntelliJLogo /></AppButton>
      <AppButton aria-label="Visual Studio Code" $running><CodeLogo /></AppButton>
    </Apps>
    <Tray>
      <TrayButton $width={40} aria-label="Hidden icons"><MdExpandLess size={24} /></TrayButton>
      <TrayButton $width={40} aria-label="Updates"><SyncIcon /></TrayButton>
      <TrayButton $width={56}>ENG<br />IN</TrayButton>
      <TrayButton $width={36} aria-label="Network"><WifiIcon /></TrayButton>
      <TrayButton $width={26} aria-label="Volume"><VolumeIcon /></TrayButton>
      <TrayButton $width={32} aria-label="Battery"><BatteryIcon /></TrayButton>
      <Clock>02:54<br />20-06-2025</Clock>
    </Tray>
  </Taskbar>
);

export default function App() {
  return (
    <>
      <GlobalStyle />
      <Screen>
        <Browser />
        <MailApp />
        <DesktopBar />
      </Screen>
    </>
  );
}
